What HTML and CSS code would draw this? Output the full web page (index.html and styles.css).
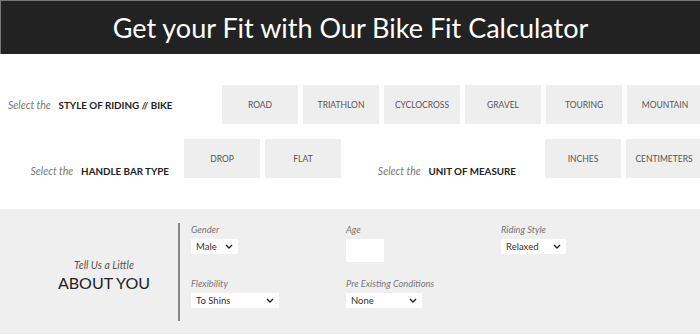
FILE: index.html
```html
<!DOCTYPE html>
<html lang="en">
<head>
    <meta charset="UTF-8">
    <meta name="viewport" content="width=device-width, initial-scale=1.0">
    <title>Bike Fit Calculator</title>
    <link rel="stylesheet" href="styles.css">
</head>
<body>
    <header class="hero">
        <h1>Get your Fit with Our Bike Fit Calculator</h1>
    </header>

    <!-- Bike / bar / unit pickers -->
    <section class="picker">
        <div class="pick-row">
            <div class="pick-label first">
                <em>Select the</em> <strong>STYLE OF RIDING // BIKE</strong>
            </div>
            <div class="btn-group">
                <button class="opt">ROAD</button>
                <button class="opt">TRIATHLON</button>
                <button class="opt">CYCLOCROSS</button>
                <button class="opt">GRAVEL</button>
                <button class="opt">TOURING</button>
                <button class="opt">MOUNTAIN</button>
            </div>
        </div>

        <div class="pick-row second">
            <div class="pick-label bar">
                <em>Select the</em> <strong>HANDLE BAR TYPE</strong>
            </div>
            <div class="btn-group">
                <button class="opt">DROP</button>
                <button class="opt">FLAT</button>
            </div>
            <div class="pick-label unit">
                <em>Select the</em> <strong>UNIT OF MEASURE</strong>
            </div>
            <div class="btn-group">
                <button class="opt">INCHES</button>
                <button class="opt">CENTIMETERS</button>
            </div>
        </div>
    </section>

    <!-- About you -->
    <section class="about">
        <div class="about-intro">
            <em>Tell Us a Little</em>
            <span>ABOUT YOU</span>
        </div>
        <div class="fields">
            <div class="field">
                <label>Gender</label>
                <div class="select w-male">Male <svg viewBox="0 0 8 5" width="8" height="5"><path d="M1 1l3 3 3-3" fill="none" stroke="#222" stroke-width="1.4"/></svg></div>
            </div>
            <div class="field">
                <label>Age</label>
                <div class="age-input"></div>
            </div>
            <div class="field">
                <label>Riding Style</label>
                <div class="select w-style">Relaxed <svg viewBox="0 0 8 5" width="8" height="5"><path d="M1 1l3 3 3-3" fill="none" stroke="#222" stroke-width="1.4"/></svg></div>
            </div>
            <div class="field">
                <label>Flexibility</label>
                <div class="select w-flex">To Shins <svg viewBox="0 0 8 5" width="8" height="5"><path d="M1 1l3 3 3-3" fill="none" stroke="#222" stroke-width="1.4"/></svg></div>
            </div>
            <div class="field">
                <label>Pre Existing Conditions</label>
                <div class="select w-cond">None <svg viewBox="0 0 8 5" width="8" height="5"><path d="M1 1l3 3 3-3" fill="none" stroke="#222" stroke-width="1.4"/></svg></div>
            </div>
        </div>
    </section>
</body>
</html>
```

FILE: styles.css
```css
body {
    margin: 0;
    font-family: Lato, "Open Sans", sans-serif;
    background: #fff;
    color: #222;
    overflow: hidden;
}
.hero {
    height: 54px;
    background: #222;
    border-top: 1px solid #777;
    border-left: 1px solid #777;
    box-sizing: border-box;
    display: flex;
    align-items: center;
    justify-content: center;
}
.hero h1 {
    margin: 0;
    color: #fff;
    font-weight: 400;
    font-size: 27px;
}
.picker {
    padding: 31px 0 31px;
    overflow: hidden;
}
.pick-row {
    display: flex;
    align-items: center;
    white-space: nowrap;
}
.pick-row.second {
    margin-top: 15px;
}
.pick-label {
    font-size: 10.5px;
    box-sizing: border-box;
    flex-shrink: 0;
}
.pick-label em {
    color: #777;
    margin-right: 5px;
}
.pick-label strong {
    font-size: 9.8px;
    font-weight: 700;
    color: #222;
}
.pick-label.first {
    width: 222px;
    padding-left: 8px;
}
.pick-label.bar,
.pick-label.unit {
    align-self: flex-end;
    text-align: right;
    margin-bottom: 1px;
}
.pick-label.bar {
    width: 184px;
    padding-right: 15px;
}
.pick-label.unit {
    width: 204px;
    padding-right: 29px;
}
.btn-group {
    display: flex;
    gap: 5px;
    flex-shrink: 0;
}
.opt {
    width: 76px;
    height: 39px;
    margin: 0;
    padding: 0;
    border: none;
    background: #eeeeee;
    color: #555;
    font-family: Lato, sans-serif;
    font-size: 8.5px;
    flex-shrink: 0;
}
.about {
    height: 125px;
    background: #efefef;
    display: flex;
}
.about-intro {
    width: 180px;
    box-sizing: border-box;
    margin: 14px 0 13px;
    padding-left: 30px;
    border-right: 2px solid #888;
    display: flex;
    flex-direction: column;
    align-items: center;
    justify-content: center;
    padding-top: 6px;
}
.about-intro em {
    font-size: 10.5px;
    color: #555;
}
.about-intro span {
    font-size: 16px;
    color: #222;
    margin-top: 2px;
}
.fields {
    padding: 14px 0 0 11px;
    display: grid;
    grid-template-columns: 155px 155px 155px;
    grid-template-rows: 40px 40px;
    row-gap: 14px;
}
.field label {
    display: block;
    font-size: 9.3px;
    font-style: italic;
    color: #777;
    line-height: 13px;
    margin-bottom: 3px;
}
.select {
    height: 15px;
    background: #fff;
    font-size: 9.5px;
    color: #333;
    padding: 0 5px;
    box-sizing: border-box;
    display: flex;
    align-items: center;
    justify-content: space-between;
}
.w-male { width: 47px; }
.w-style { width: 65px; }
.w-flex { width: 88px; }
.w-cond { width: 76px; }
.age-input {
    width: 38px;
    height: 23px;
    background: #fff;
}
```
